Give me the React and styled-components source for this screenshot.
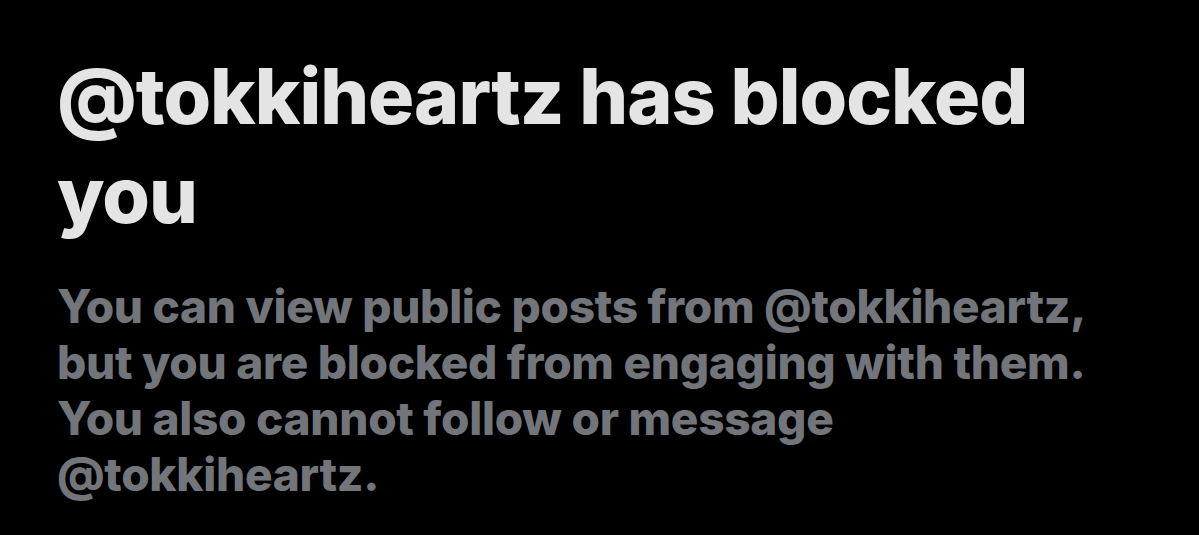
import React from 'react';
import styled, { createGlobalStyle } from 'styled-components';

const GlobalStyle = createGlobalStyle`
  html, body {
    margin: 0;
    background: #000;
  }
`;

const Screen = styled.div`
  width: 1199px;
  height: 535px;
  background: #000;
  box-sizing: border-box;
  padding: 47px 0 0 57px;
  font-family: Inter, "Noto Sans", sans-serif;
  overflow: hidden;
`;

const Content = styled.div`
  max-width: 1090px;
  display: flex;
  flex-direction: column;
  gap: 33px;
`;

const Title = styled.h1`
  margin: 0;
  font-size: 77px;
  line-height: 99px;
  font-weight: 800;
  letter-spacing: -1px;
  color: #e4e4e4;
`;

const Notice = styled.p`
  margin: 0;
  font-size: 46px;
  line-height: 56px;
  font-weight: 800;
  letter-spacing: -0.3px;
  color: #72767b;
`;

export default function App() {
  const handle = '@tokkiheartz';
  return (
    <>
      <GlobalStyle />
      <Screen>
        <Content>
          <Title>{handle} has blocked you</Title>
          <Notice>
            You can view public posts from {handle}, but you are blocked from engaging with them.
            You also cannot follow or message {handle}.
          </Notice>
        </Content>
      </Screen>
    </>
  );
}
